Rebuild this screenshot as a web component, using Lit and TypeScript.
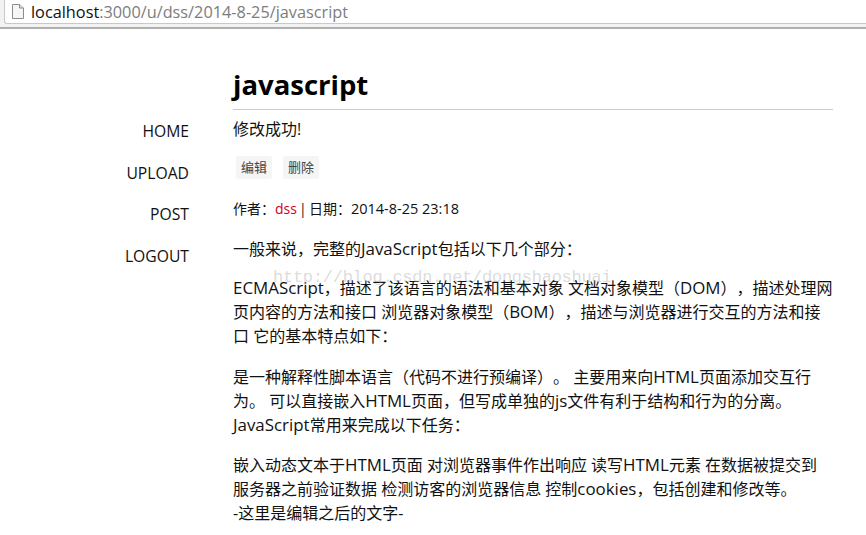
import { LitElement, html, css } from "lit";
import { customElement } from "lit/decorators.js";

const latin = (text: string) =>
  text
    .split(/([A-Za-z]+)/)
    .map((part, i) => (i % 2 ? html`<span class="l">${part}</span>` : part));

@customElement("app-root")
export class AppRoot extends LitElement {
  static styles = css`
    :host {
      display: block;
      width: 866px;
      height: 535px;
      overflow: hidden;
      background: #fff;
      position: relative;
      font-family: "Open Sans", "Noto Sans CJK SC", sans-serif;
      color: #111;
      text-spacing-trim: space-all;
    }
    .chrome {
      background: #f2f2f2;
      border-bottom: 2px solid #b0b0b0;
      padding: 0 0 3px 4px;
    }
    .bar {
      height: 24px;
      box-sizing: border-box;
      background: #fff;
      border-bottom: 1px solid #c8c8c8;
      border-left: 1px solid #c8c8c8;
      border-bottom-left-radius: 3px;
      display: flex;
      align-items: center;
      gap: 7px;
      padding-left: 7px;
      font-family: "Open Sans", sans-serif;
      font-size: 16.3px;
      color: #7d7d7d;
    }
    .bar b { font-weight: 400; color: #111; }
    .bar svg { display: block; }
    .page {
      display: grid;
      grid-template-columns: 189px 600px;
      column-gap: 44px;
      padding-top: 36px;
    }
    nav {
      display: flex;
      flex-direction: column;
      align-items: flex-end;
      padding-top: 55px;
      gap: 19.5px;
      font-size: 15.7px;
      line-height: 22px;
    }
    h1 {
      margin: 0;
      font-size: 27.5px;
      font-weight: 700;
      line-height: 40px;
      color: #000;
      padding-bottom: 4px;
      border-bottom: 1px solid #ccc;
    }
    .ok { font-size: 16px; line-height: 22px; margin-top: 8px; }
    .btns { display: flex; gap: 11px; margin: 16px 0 0 3px; }
    .btn {
      font-size: 13px;
      line-height: 23px;
      padding: 0 5px;
      border-radius: 3px;
      background: #f5f5f5;
      color: #444;
    }
    .meta { font-size: 14px; line-height: 20px; margin-top: 20px; }
    .meta .author { color: #d0021b; }
    .meta .sep { margin: 0 -1.5px; }
    .meta .date { font-size: 14.5px; }
    p { margin: 16px 0 0; font-size: 16px; line-height: 24px; }
    .l { font-size: 16.9px; }
    .first { margin-top: 18px; }
    .m15 { margin-top: 15px; }
    .m17 { margin-top: 17px; }
    .mark {
      position: absolute;
      left: 273px;
      top: 268px;
      font-family: "Liberation Mono", monospace;
      font-size: 17px;
      letter-spacing: -0.25px;
      color: rgba(165, 165, 165, 0.4);
      white-space: nowrap;
    }
  `;

  render() {
    return html`
      <div class="chrome">
        <div class="bar">
          <svg width="12" height="15" viewBox="0 0 12 15">
            <path d="M.5 .5h7L11.500 4v10.500H.5z" fill="#f6f6f6" stroke="#8c8c8c" />
            <path d="M7.500.5V4h4" fill="#dcdcdc" stroke="#8c8c8c" />
          </svg>
          <div><b>localhost</b>:3000/u/dss/2014-8-25/javascript</div>
        </div>
      </div>
      <div class="page">
        <nav>
          <div>HOME</div>
          <div>UPLOAD</div>
          <div>POST</div>
          <div>LOGOUT</div>
        </nav>
        <main>
          <h1>javascript</h1>
          <div class="ok">修改成功!</div>
          <div class="btns"><div class="btn">编辑</div><div class="btn">删除</div></div>
          <div class="meta">作者：<span class="author">dss</span> <span class="sep">|</span> 日期：<span class="date">2014-8-25 23:18</span></div>
          <p class="first">${latin("一般来说，完整的JavaScript包括以下几个部分：")}</p>
          <p class="m15">${latin("ECMAScript，描述了该语言的语法和基本对象 文档对象模型（DOM），描述处理网页内容的方法和接口 浏览器对象模型（BOM），描述与浏览器进行交互的方法和接口 它的基本特点如下：")}</p>
          <p class="m17">${latin("是一种解释性脚本语言（代码不进行预编译）。 主要用来向HTML页面添加交互行为。 可以直接嵌入HTML页面，但写成单独的js文件有利于结构和行为的分离。 JavaScript常用来完成以下任务：")}</p>
          <p>${latin("嵌入动态文本于HTML页面 对浏览器事件作出响应 读写HTML元素 在数据被提交到服务器之前验证数据 检测访客的浏览器信息 控制cookies，包括创建和修改等。")}<br />-这里是编辑之后的文字-</p>
        </main>
      </div>
      <div class="mark">http://blog.csdn.net/dongshaoshuai</div>
    `;
  }
}
